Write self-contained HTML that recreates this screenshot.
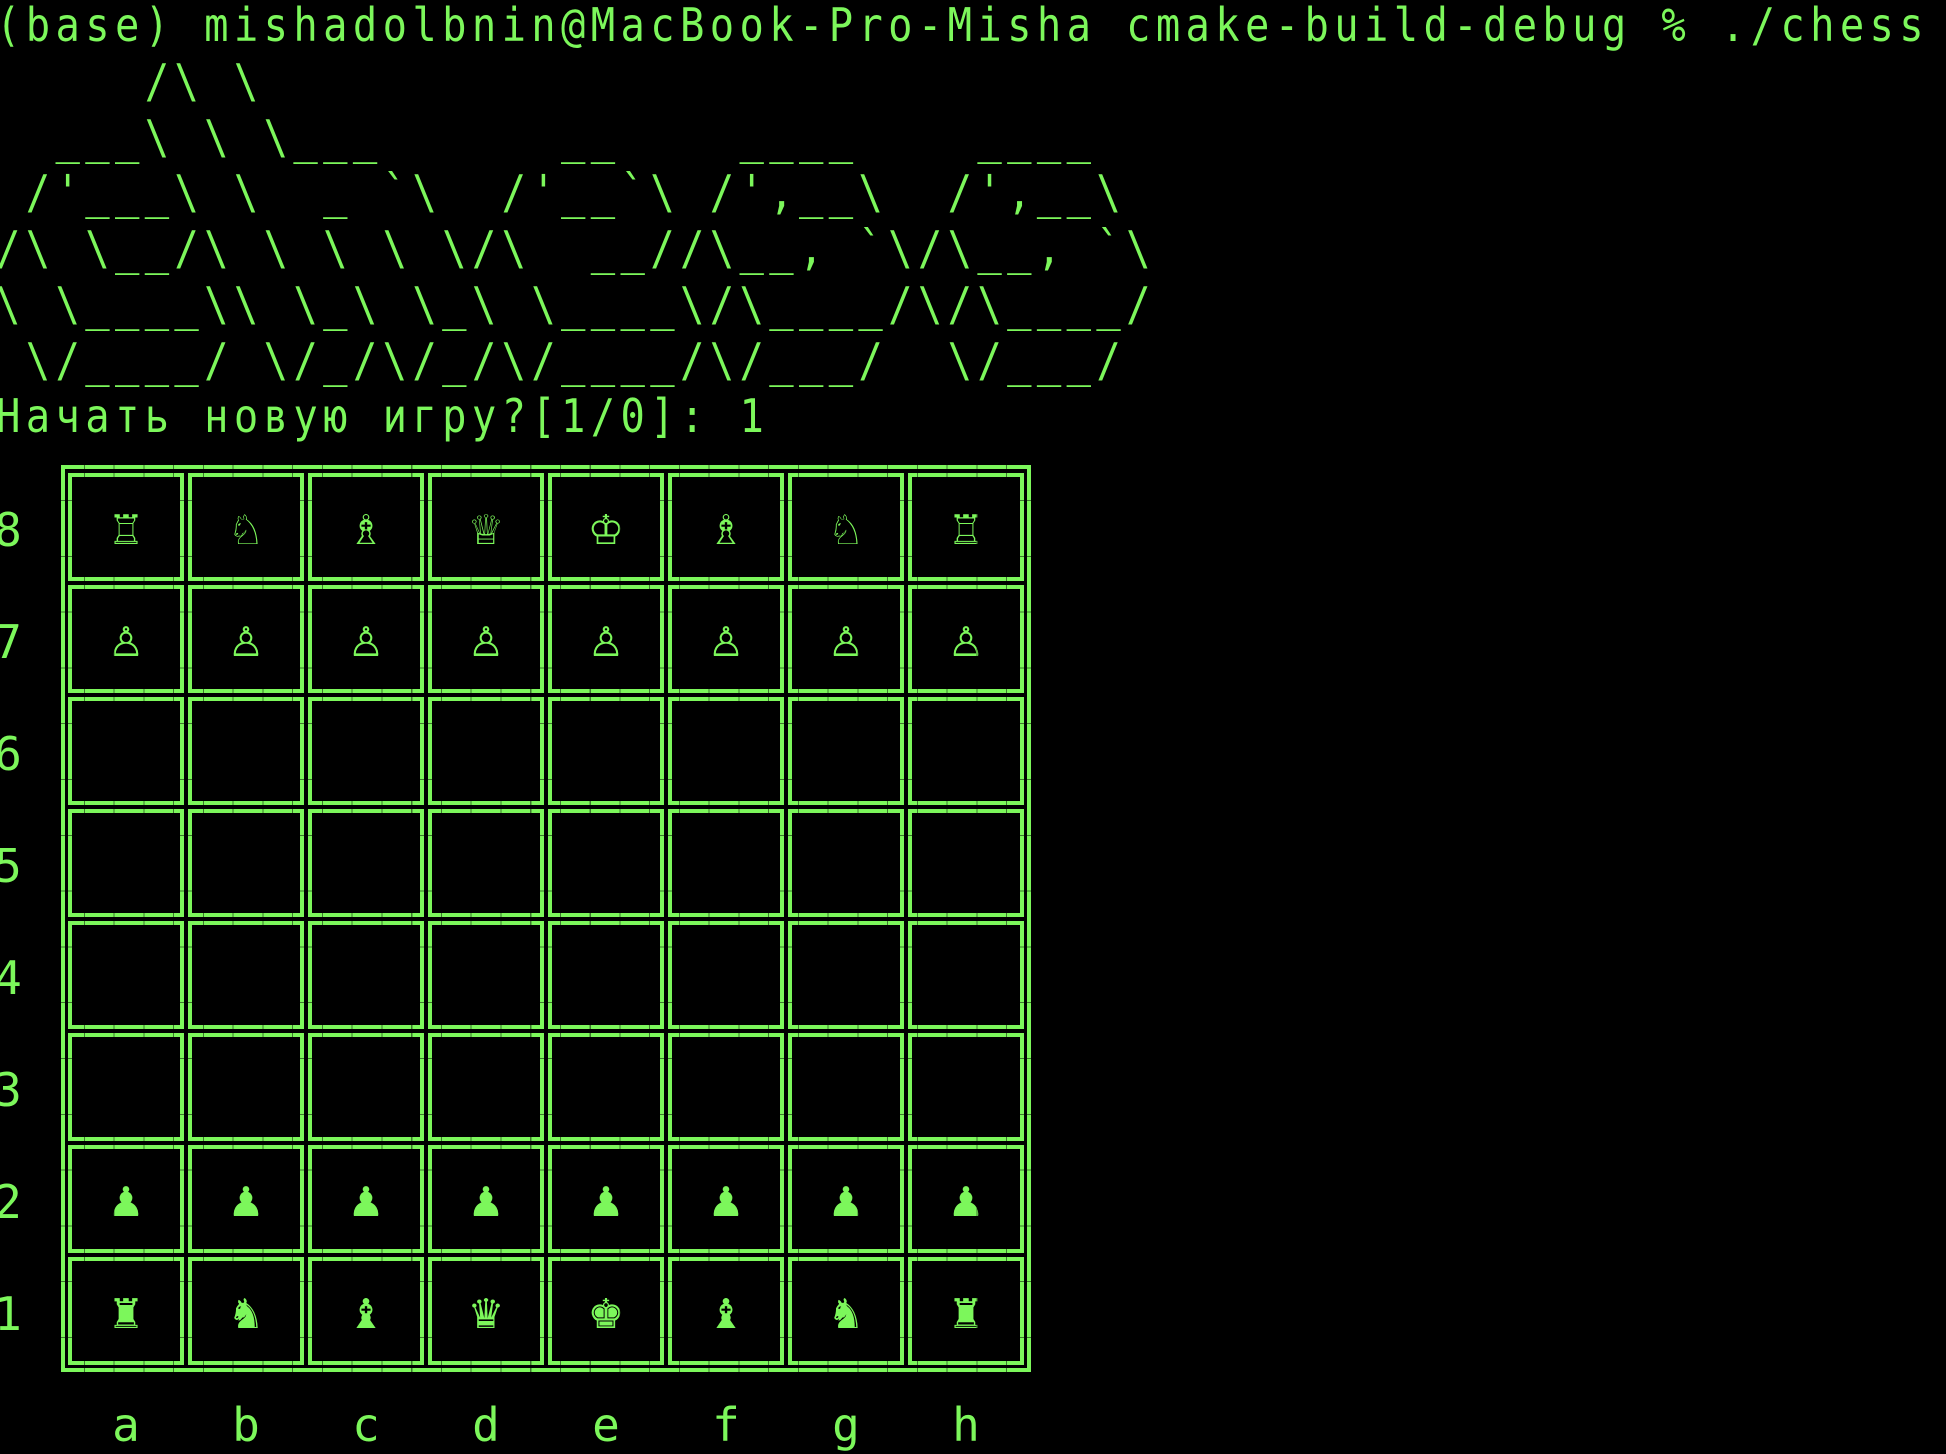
<!DOCTYPE html>
<html><head><meta charset="utf-8"><style>
html,body{margin:0;padding:0;background:#000;width:1946px;height:1454px;overflow:hidden;position:relative}
.t{position:absolute;left:-4px;white-space:pre;font-family:"DejaVu Sans Mono","Liberation Mono",monospace;font-size:46px;letter-spacing:6.1px;color:#7cf75b;line-height:56px;height:56px;transform:scaleX(0.88);transform-origin:0 0}
.frame{position:absolute;border:4px solid #7cf75b;box-sizing:border-box}
.p{position:absolute;width:116px;height:108px;display:flex;align-items:center;justify-content:center;font-family:"DejaVu Sans",sans-serif;font-size:41px;color:#7cf75b;padding-top:6px;box-sizing:border-box}
.lab{position:absolute;width:40px;text-align:center;font-family:"DejaVu Sans Mono",monospace;font-size:46px;color:#7cf75b;line-height:56px}
.grid{position:absolute;left:61px;top:465px;width:970px;height:907px;background:
repeating-linear-gradient(90deg,transparent 0,transparent 23px,#000 23px,#000 24px,transparent 24px,transparent 29.75px),
repeating-linear-gradient(0deg,transparent 0,transparent 34px,#000 34px,#000 35px,transparent 35px,transparent 55.8px);opacity:.5;pointer-events:none}
</style></head><body>
<div class="t" style="top:-3px">(base) mishadolbnin@MacBook-Pro-Misha cmake-build-debug % ./chess</div>
<div class="t" style="top:53px">     /\ \</div>
<div class="t" style="top:109px">  ___\ \ \___      __    ____    ____</div>
<div class="t" style="top:164px"> /'___\ \  _ `\  /'__`\ /',__\  /',__\</div>
<div class="t" style="top:220px">/\ \__/\ \ \ \ \/\  __//\__, `\/\__, `\</div>
<div class="t" style="top:276px">\ \____\\ \_\ \_\ \____\/\____/\/\____/</div>
<div class="t" style="top:332px"> \/____/ \/_/\/_/\/____/\/___/  \/___/</div>
<div class="t" style="top:388px">Начать новую игру?[1/0]: 1</div>

<div class="frame" style="left:61px;top:465px;width:970px;height:907px"></div>
<div id="cells"></div>
<div class="grid"></div>
<script>
var c=document.getElementById('cells'),h='';
var rows={0:'♖♘♗♕♔♗♘♖',1:'♙♙♙♙♙♙♙♙',6:'♟♟♟♟♟♟♟♟',7:'♜♞♝♛♚♝♞♜'};
for(var j=0;j<8;j++){for(var i=0;i<8;i++){var x=68+120*i,y=473+112*j;
h+='<div class="frame" style="left:'+x+'px;top:'+y+'px;width:116px;height:108px"></div>';
if(rows[j]){h+='<div class="p" style="left:'+x+'px;top:'+y+'px">'+Array.from(rows[j])[i]+'\uFE0E</div>';}}
h+='<div class="lab" style="left:-12px;top:'+(502+112*j)+'px">'+(8-j)+'</div>';}
var L='abcdefgh';for(var i=0;i<8;i++){h+='<div class="lab" style="left:'+(106+120*i)+'px;top:1397px">'+L[i]+'</div>';}
c.innerHTML=h;
</script>
</body></html>
